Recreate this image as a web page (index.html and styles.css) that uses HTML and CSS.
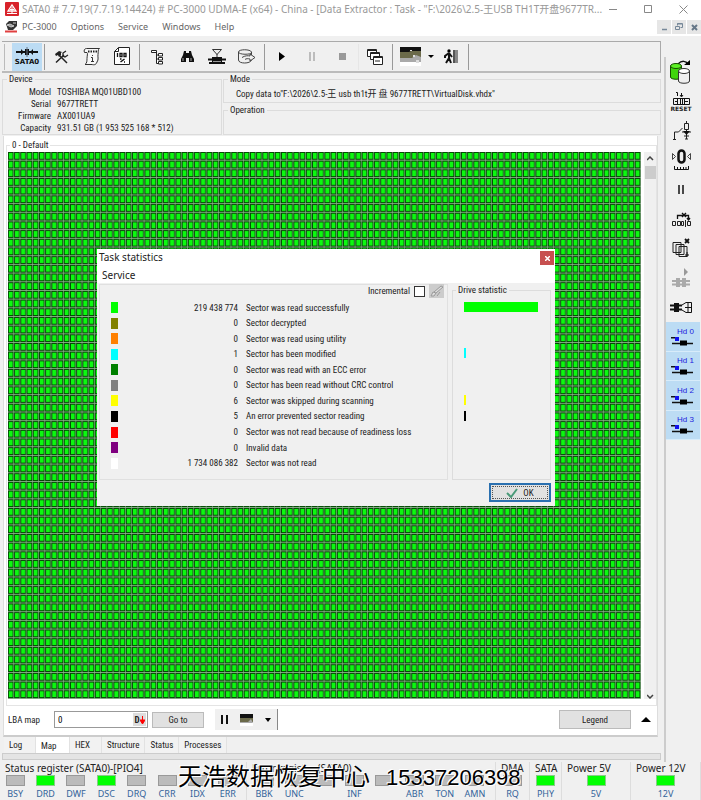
FILE: index.html
```html
<!DOCTYPE html>
<html lang="en">
<head>
<meta charset="utf-8">
<title>PC-3000 UDMA-E</title>
<link rel="stylesheet" href="styles.css">
</head>
<body>
<header class="titlebar">
  <svg class="app-icon" width="14" height="14" viewBox="0 0 14 14"><rect width="14" height="14" rx="1" fill="#d8222a"/><path d="M3 9l4-6 4 6z" stroke="#fff" fill="none" stroke-width="1.300"/><path d="M2 11.500h10M5 7.500h4M7 5v6" stroke="#fff" fill="none"/></svg>
  <h1 class="title">SATA0 # 7.7.19(7.7.19.14424) # PC-3000 UDMA-E (x64) - China - [Data Extractor : Task - "F:\2026\2.5-王USB TH1T开盘9677TR...</h1>
  <div class="winbtns">
    <button aria-label="Minimize"><svg width="9" height="9"><path d="M0 4.500h8" stroke="#888"/></svg></button>
    <button aria-label="Maximize"><svg width="9" height="9"><path d="M.5.5h7v7h-7z" fill="none" stroke="#888"/></svg></button>
    <button aria-label="Close"><svg width="9" height="9"><path d="M.5.5l8 8m0-8l-8 8" stroke="#888"/></svg></button>
  </div>
</header>
<nav class="menubar">
  <svg class="app-icon" width="14" height="12" viewBox="0 0 14 12"><path d="M1 3l3-3h8v5l-4 4H3z" fill="#333"/><path d="M2 4l3-1 4 2-3 1zM8 2h3" stroke="#ccc" fill="#999"/><path d="M0 10.500h12" stroke="#e04040" stroke-width="2"/></svg>
  <a href="#">PC-3000</a><a href="#">Options</a><a href="#">Service</a><a href="#">Windows</a><a href="#">Help</a>
  <div class="mdi">
    <button aria-label="Minimize child"><svg width="7" height="7"><path d="M1 5.500h5" stroke="#789" stroke-width="1.500"/></svg></button>
    <button aria-label="Restore child"><svg width="8" height="8"><path d="M2.500 2.500v-2h5v4h-2M.5 3.500h4v3h-4zM2 1h5" fill="none" stroke="#789"/></svg></button>
    <button aria-label="Close child"><svg width="7" height="7"><path d="M1 1l5 5m0-5l-5 5" stroke="#678" stroke-width="2"/></svg></button>
  </div>
</nav>

<div class="workspace">
  <main class="main">
    <div class="toolbar">
      <i class="sep grip"></i>
      <button class="tb active" aria-label="SATA0"><svg width="22" height="10" viewBox="0 0 22 10"><path d="M0 5h22" stroke="#111" stroke-width="2"/><path d="M5 2v6l3-3zM17 2v6l-3-3zM9 2h4v6H9z" fill="#111"/><path d="M11 0v10" stroke="#678"/></svg><b>SATA0</b></button>
      <i class="sep"></i>
      <button class="tb" aria-label="Utilities"><svg width="14" height="14" viewBox="0 0 14 14"><path d="M1 12.500L9 5M4 5l8 8" stroke="#222" stroke-width="1.500"/><path d="M0 4l4-3 3 1-1 1v2L4 7 3 5 1 6z" fill="#222"/><path d="M11 1L8 3v3l2 1 3-2" fill="none" stroke="#222" stroke-width="1.300"/></svg></button>
      <button class="tb" aria-label="Script"><svg width="18" height="19" viewBox="0 0 18 19"><path d="M3.500 1.500h13c-2 1-1 4-1.500 6s1 5-1 7.500c-1 3-3 3-5 2.500H2c2-1 2-4 2-6S5 6 4 5.500H1.500c-1-2 0-4 2-4z" fill="#f8f8f8" stroke="#333"/><path d="M5 4.500h9" stroke="#222" stroke-width="2" stroke-dasharray="1.500 1"/><path d="M9.500 8v1M8 10.500h1.500v4M8 14.500h3" stroke="#333" fill="none"/></svg></button>
      <button class="tb" aria-label="Sector edit"><svg width="16" height="19" viewBox="0 0 16 19"><path d="M4.500.5h11v17H.5V4.500z" fill="#fff" stroke="#222"/><path d="M.5 4.500h4v-4" fill="none" stroke="#222"/><path d="M3.500 6v4M6 6.500h2v3H6zM10 6.500h2v3h-2z" stroke="#111" stroke-width="1.300" fill="none"/><path d="M6 12h1.500M6.500 15l4-3M10 15h1" stroke="#111" stroke-width="1.500"/></svg></button>
      <i class="sep"></i>
      <button class="tb" aria-label="Tree"><svg width="13" height="16" viewBox="0 0 13 16"><path d="M.5 1.500h5v2h-5zM5.500 3v11.500h2M5.500 6h2M5.500 10h2" fill="#fff" stroke="#222"/><path d="M7.500 4.500h4v2.500h-4zM7.500 8.500h4V11h-4zM7.500 12.500h4V15h-4z" fill="#fff" stroke="#222"/></svg></button>
      <button class="tb" aria-label="Search"><svg width="13" height="12" viewBox="0 0 13 12"><path d="M3 0h2v2h3V0h2l1 4 2 4v3H8V7H5v4H0V8l2-4z" fill="#111"/><path d="M2 7v3M10 7v3" stroke="#aaa"/></svg></button>
      <button class="tb" aria-label="Filter"><svg width="18" height="16" viewBox="0 0 18 16"><path d="M4.500.5h9L9 5.500zM9 5v4" fill="#eee" stroke="#333"/><path d="M0 10.500h18M1 14h16" stroke="#111" stroke-width="2"/><path d="M4 8h10v7H4z" fill="#111"/><path d="M5 12.500h8" stroke="#999"/></svg></button>
      <button class="tb" aria-label="Export"><svg width="18" height="15" viewBox="0 0 18 15"><path d="M.5 3v8c0 4 12 4 13 0M.5 3c0-3 12-3 13 0s-13 3-13 0M13.500 3v3" fill="none" stroke="#444"/><path d="M4 8.500c3-2 6-2 8-1.500V5l5 3.500-5 3.500v-2c-2-.5-4-.5-5 .5" fill="#f0f0f0" stroke="#444"/></svg></button>
      <i class="sep"></i>
      <button class="tb" aria-label="Start"><svg width="6" height="9"><path d="M0 0l6 4.500L0 9z"/></svg></button>
      <button class="tb" aria-label="Pause"><svg width="6" height="9"><path d="M1 0v9M5 0v9" stroke="#aaa" stroke-width="1.500"/></svg></button>
      <button class="tb" aria-label="Stop"><svg width="7" height="7"><path d="M0 0h7v7H0z" fill="#999"/></svg></button>
      <i class="sep light"></i>
      <button class="tb" aria-label="Windows"><svg width="16" height="16" viewBox="0 0 16 16"><g fill="#fff" stroke="#222"><path d="M.5.5h9v7h-9z"/><path d="M0 1.500h10"/><path d="M3.500 3.500h9v7h-9z"/><path d="M3 4.500h10"/><path d="M6.500 7.500h9v8h-9z"/><path d="M6 8.500h10M8 12h5"/></g></svg></button>
      <i class="sep"></i>
      <button class="tb" aria-label="Map view"><svg width="21" height="19" viewBox="0 0 21 19"><path d="M0 0h21v6H0z" fill="#111"/><path d="M0 5h9l2-1h10v7H0z" fill="#6b6a4a"/><path d="M0 11h12l4-3 5 2v5H0z" fill="#aaa"/><path d="M0 15h21v4H0z" fill="#fff"/><path d="M13 8h2v2h-2zM16 13h3v3h-3zM10 3h2v1h-2z" fill="#ddd"/></svg></button>
      <button class="drop" aria-label="Map view options"><svg width="6" height="3"><path d="M0 0h6L3 3z"/></svg></button>
      <button class="tb" aria-label="Exit"><svg width="14" height="15" viewBox="0 0 14 15"><circle cx="5" cy="2" r="1.700"/><path d="M5 4L1 7v2M5 4l3 4M5 4v5l-3 5M5 9l2 5" fill="none" stroke="#111" stroke-width="2"/><path d="M9 1h5v13H9z" fill="#888"/><path d="M10 1v13" stroke="#222"/></svg></button>
      <i class="sep"></i>
    </div>

    <section class="info">
      <fieldset class="device"><legend>Device</legend>
        <dl><dt>Model</dt><dd>TOSHIBA MQ01UBD100</dd><dt>Serial</dt><dd>9677TRETT</dd><dt>Firmware</dt><dd>AX001UA9</dd><dt>Capacity</dt><dd>931.51 GB (1 953 525 168 * 512)</dd></dl>
      </fieldset>
      <div class="modes">
        <fieldset class="mode"><legend>Mode</legend><p>Copy data to"F:\2026\2.5-王 usb th1t开 盘 9677TRETT\VirtualDisk.vhdx"</p></fieldset>
        <fieldset class="operation"><legend>Operation</legend></fieldset>
      </div>
    </section>

    <section class="panel">
      <fieldset class="map"><legend>0 - Default</legend>
        <div class="mapbody">
          <svg class="cells" viewBox="0 0 1020 630" preserveAspectRatio="none" role="img" aria-label="Sector map">
            <defs><pattern id="cell" width="10" height="10" patternUnits="userSpaceOnUse"><path fill="#8fb08f" d="M0 0h10v10H0z"/><path fill="#044804" d="M0 0h9v9H0z"/><path fill="#0cf810" d="M1.400 1.100h6.200v6.800h-6.200z"/></pattern></defs>
            <rect width="1020" height="630" fill="url(#cell)"/>
          </svg>
          <div class="scroll"><svg width="7" height="5"><path d="M0 4l3-3 3 3" fill="none" stroke="#444" stroke-width="1.500"/></svg><i class="thumb"></i><svg width="7" height="5"><path d="M0 1l3 3 3-3" fill="none" stroke="#444" stroke-width="1.500"/></svg></div>
        </div>
      </fieldset>
      <div class="lba">
        <label for="lba">LBA map</label>
        <span class="field"><input id="lba" value="0"><button aria-label="Decimal"><b>D</b><svg width="5" height="8"><path d="M2.500 0v5M0 4h5L2.500 8z" fill="red" stroke="red"/></svg></button></span>
        <button class="btn goto">Go to</button>
        <div class="mini">
          <button aria-label="Pause map"><svg width="7" height="9"><path d="M1 0v9M6 0v9" stroke="#111" stroke-width="2"/></svg></button>
          <button aria-label="Map mode"><svg width="13" height="12" viewBox="0 0 13 12"><path d="M0 0h13v5H0z" fill="#111"/><path d="M0 4h13v4H0z" fill="#6b6a4a"/><path d="M0 8h8l3-3 2 4H0z" fill="#aaa"/><path d="M0 9h13v3H0z" fill="#fff"/></svg></button>
          <button aria-label="Map mode options"><svg width="6" height="4"><path d="M0 0h6L3 4z"/></svg></button>
        </div>
        <button class="btn legend-btn">Legend</button>
        <button class="up" aria-label="Collapse"><svg width="10" height="5"><path d="M0 5h10L5 0z"/></svg></button>
      </div>
    </section>

    <nav class="tabs"><a href="#">Log</a><a href="#" class="on">Map</a><a href="#">HEX</a><a href="#">Structure</a><a href="#">Status</a><a href="#">Processes</a></nav>
    <div class="strip"></div>
  </main>

  <aside class="side">
    <div class="side-list">
    <button aria-label="Copy drive"><svg width="22" height="24" viewBox="0 0 22 24"><path d="M8 4c4-4 8-3 10 0" fill="none" stroke="#111" stroke-width="1.500"/><path d="M14 5h6V0z"/><path d="M.5 6v11c0 3 11 3 11 0V6z" fill="#3fd60c" stroke="#174d00"/><ellipse cx="6" cy="6" rx="5.500" ry="2.500" fill="#5cf024" stroke="#174d00"/><path d="M8.500 11v10c0 3 11 3 11 0V11z" fill="#eee" stroke="#333"/><ellipse cx="14" cy="11" rx="5.500" ry="2.500" fill="#fff" stroke="#333"/></svg></button>
    <button class="reset" aria-label="Reset"><svg width="17" height="15" viewBox="0 0 17 15"><path d="M3 1.500h1.500V5M8.500 2v3M7 4l1.500 2L10 4" fill="none" stroke="#111"/><path d="M.5 7.500h16v6H.5zM2 10.500h2M12 10.500h3" stroke="#111" fill="none"/><path d="M4.500 8v5M7.500 8v5M9.500 8v5M11.500 8v5" stroke="#111"/></svg><b>RESET</b></button>
    <button aria-label="Power switch"><svg width="19" height="19" viewBox="0 0 19 19"><path d="M1 18.500h3M2.500 18v-7h4l4-4M10 11h9M14.500 0v3M14.500 9v9M12 15h5M13 18h3" fill="none" stroke="#222"/><path d="M12.500 2.500h4v6h-4z" fill="#eee" stroke="#222"/><path d="M11 10h7l-3.500 4z" fill="#111"/></svg></button>
    <button aria-label="Position zero"><svg width="19" height="22" viewBox="0 0 19 22"><rect x="6.500" y="1.500" width="6" height="12" rx="3" fill="none" stroke="#111" stroke-width="2.500"/><path d="M.5 4.500v6l3-3zM18.500 4.500v6l-3-3z" fill="none" stroke="#444"/><path d="M2.500 17v3.500h14V17M5.500 18v3M8.500 18v3M11.500 18v3M14 18v3" fill="none" stroke="#111"/></svg></button>
    <button aria-label="Pause drive"><svg width="6" height="9"><path d="M1 0v9M5 0v9" stroke="#111" stroke-width="1.500"/></svg></button>
    <button aria-label="Skip"><svg width="19" height="15" viewBox="0 0 19 15"><path d="M5.500 7V3.500h11V7M15 6l1.500 2L18 6M10 1l4 4m0-4l-4 4" fill="none" stroke="#111" stroke-width="1.300"/><path d="M.5 9.500h3v4h-3zM5.500 9.500h3v4h-3zM9.500 9.500h2v4h-2zM13.500 8v7M15.500 9.500h3v4h-3z" fill="none" stroke="#222"/></svg></button>
    <button aria-label="Clear copies"><svg width="18" height="20" viewBox="0 0 18 20"><path d="M13 1l4 4m0-4l-4 4" stroke="#111" stroke-width="1.800"/><path d="M1 4.500h8v10H1zM4 6.500h8v10H4zM7 8.500h8v10H7z" fill="#eee" stroke="#222"/><path d="M15 14v5M13 17h4" stroke="#111"/></svg></button>
    <button aria-label="Resume head"><svg width="18" height="20" viewBox="0 0 18 20"><path d="M12 0v8l4-4z" fill="#999"/><path d="M0 13h18M0 16.500h18" stroke="#aaa" stroke-width="2"/><path d="M4 10h4v9H4zM10 10h4v9h-4z" fill="#aaa"/></svg></button>
    <button aria-label="Connector"><svg width="22" height="11" viewBox="0 0 22 11"><path d="M0 3.500h12M0 7.500h12" stroke="#111" stroke-width="2"/><path d="M4 1h5v9H4z" fill="#111"/><path d="M12 3l4-2.500h5.500v10H16L12 8M15 5.500h6M18 1v9" fill="none" stroke="#111"/></svg></button>
    <button class="hd"><span>Hd 0</span><svg width="22" height="9" viewBox="0 0 22 9"><path d="M0 .7h4M1 6.500h21" stroke="#111" stroke-width="1.500"/><path d="M4 0h4v4H4z" fill="#11e"/><path d="M9 3.500h7v5H9z"/></svg></button>
    <button class="hd"><span>Hd 1</span><svg width="22" height="9" viewBox="0 0 22 9"><path d="M0 .7h4M1 6.500h21" stroke="#111" stroke-width="1.500"/><path d="M4 0h4v4H4z" fill="#11e"/><path d="M9 3.500h7v5H9z"/></svg></button>
    <button class="hd"><span>Hd 2</span><svg width="22" height="9" viewBox="0 0 22 9"><path d="M0 .7h4M1 6.500h21" stroke="#111" stroke-width="1.500"/><path d="M4 0h4v4H4z" fill="#11e"/><path d="M9 3.500h7v5H9z"/></svg></button>
    <button class="hd"><span>Hd 3</span><svg width="22" height="9" viewBox="0 0 22 9"><path d="M0 .7h4M1 6.500h21" stroke="#111" stroke-width="1.500"/><path d="M4 0h4v4H4z" fill="#11e"/><path d="M9 3.500h7v5H9z"/></svg></button>
    </div>
  </aside>
</div>

<footer class="registers">
  <section class="reg status"><h2>Status register (SATA0)-[PIO4]</h2><ul><li>BSY</li><li class="lit">DRD</li><li>DWF</li><li class="lit">DSC</li><li>DRQ</li><li>CRR</li><li>IDX</li><li>ERR</li></ul></section>
  <section class="reg errors"><h2>Error register (SATA0)</h2><ul><li>BBK</li><li>UNC</li><li></li><li>INF</li><li></li><li>ABR</li><li>TON</li><li>AMN</li></ul></section>
  <section class="reg"><h2>DMA</h2><ul><li>RQ</li></ul></section>
  <section class="reg"><h2>SATA</h2><ul><li class="lit">PHY</li></ul></section>
  <section class="reg"><h2>Power 5V</h2><ul><li class="lit">5V</li></ul></section>
  <section class="reg"><h2>Power 12V</h2><ul><li class="lit">12V</li></ul></section>
  <p class="watermark">天浩数据恢复中心<span>15337206398</span></p>
</footer>

<div class="dialog" role="dialog" aria-labelledby="dlg-title">
  <div class="dlg-title"><h2 id="dlg-title">Task statistics</h2><button aria-label="Close dialog"><svg width="5" height="5"><path d="M0 0l5 5m0-5L0 5" stroke="#fff" stroke-width="1.500"/></svg></button></div>
  <nav class="dlg-menu"><a href="#">Service</a></nav>
  <div class="dlg-body">
    <section class="stats">
      <div class="inc"><label for="inc">Incremental</label><input type="checkbox" id="inc"><button aria-label="Clear statistics" disabled><svg width="15" height="14" viewBox="0 0 15 14"><path d="M2 12l2-4 3 1-2 3zM5 8l7-6 2 1-7 6M8 12l3-4" fill="#ddd" stroke="#999"/></svg></button></div>
      <table>
        <tr><td><i class="sw ok"></i></td><td>219 438 774</td><td>Sector was read successfully</td></tr>
        <tr><td><i class="sw decrypted"></i></td><td>0</td><td>Sector decrypted</td></tr>
        <tr><td><i class="sw utility"></i></td><td>0</td><td>Sector was read using utility</td></tr>
        <tr><td><i class="sw modified"></i></td><td>1</td><td>Sector has been modified</td></tr>
        <tr><td><i class="sw ecc"></i></td><td>0</td><td>Sector was read with an ECC error</td></tr>
        <tr><td><i class="sw crc"></i></td><td>0</td><td>Sector has been read without CRC control</td></tr>
        <tr><td><i class="sw skipped"></i></td><td>6</td><td>Sector was skipped during scanning</td></tr>
        <tr><td><i class="sw error"></i></td><td>5</td><td>An error prevented sector reading</td></tr>
        <tr><td><i class="sw notready"></i></td><td>0</td><td>Sector was not read because of readiness loss</td></tr>
        <tr><td><i class="sw invalid"></i></td><td>0</td><td>Invalid data</td></tr>
        <tr><td><i class="sw unread"></i></td><td>1 734 086 382</td><td>Sector was not read</td></tr>
      </table>
    </section>
    <fieldset class="drive"><legend>Drive statistic</legend>
      <div class="bars"><i class="bar ok full"></i><i></i><i></i><i class="bar modified"></i><i></i><i></i><i class="bar skipped"></i><i class="bar error"></i><i></i><i></i><i></i></div>
    </fieldset>
  </div>
  <div class="dlg-foot"><button class="okbtn"><svg width="12" height="10"><path d="M1 5l4 4 6-8" fill="none" stroke="#4a9a78" stroke-width="2"/></svg>OK</button></div>
</div>
</body>
</html>
```
FILE: styles.css
```css
* { box-sizing: border-box; }
body {
  margin: 0;
  min-height: 100vh;
  display: flex;
  flex-direction: column;
  position: relative;
  background: #f0f0f0;
  color: #222;
  font: 9px/12px "Roboto Condensed", Roboto, "Noto Sans CJK SC", sans-serif;
}
h1, h2, p, dl, dd, ul { margin: 0; padding: 0; font-weight: normal; font-size: inherit; }
a { color: inherit; text-decoration: none; }
svg { display: block; flex: none; }
button { margin: 0; padding: 0; border: 0; background: none; color: inherit; font: inherit; display: flex; align-items: center; justify-content: center; }
fieldset { margin: 0; padding: 0; border: 1px solid #dcdcdc; min-width: 0; }
legend { padding: 0 2px; margin-left: 4px; }

.titlebar, .menubar { display: flex; align-items: center; height: 18px; background: #fff; padding-left: 5px; color: #999; font-family: "Noto Sans", "Noto Sans CJK SC", sans-serif; }
.title { flex: 1; min-width: 0; margin-left: 3px; font-size: 10px; white-space: nowrap; line-height: 18px; }
.winbtns { display: flex; flex: none; }
.winbtns button { width: 35px; height: 18px; }
.menubar { color: #666; font-size: 9px; }
.menubar a { margin-left: 14px; }
.menubar .app-icon + a { margin-left: 3px; }
.mdi { display: flex; gap: 1px; margin-left: auto; }
.mdi button { width: 14px; height: 14px; background: #e6e6e6; }

.workspace { flex: 1; display: flex; }
.main { flex: 1; min-width: 0; display: flex; flex-direction: column; padding: 5px 3px 0 2px; }
.toolbar { display: flex; align-items: center; height: 32px; border: 1px solid #aaa; border-left: 0; border-bottom: 2px solid #bbb; }
.tb { width: 30px; height: 28px; flex-direction: column; gap: 2px; }
.tb b { font: bold 7px/7px "DejaVu Sans", sans-serif; color: #111; }
.tb.active { background: #bcdcf4; }
.sep { width: 1px; height: 26px; background: #999; margin: 0 2px; }
.sep.grip { margin: 0 7px 0 2px; background: #bbb; }
.sep.light { background: #e6e6e6; margin: 0 1px; }
.drop { width: 11px; height: 28px; }

.info { display: flex; gap: 1px; height: 62px; }
.info fieldset { height: 100%; }
.device { width: 220px; }
.device dl { display: grid; grid-template-columns: 48px 1fr; column-gap: 6px; grid-auto-rows: 12px; margin-top: 1px; }
.device dt { text-align: right; }
.modes { flex: 1; display: flex; flex-direction: column; gap: 1px; }
.info .mode { height: 30px; }
.info .operation { flex: 1; height: auto; }
.modes p { padding: 3px 12px; line-height: 12px; white-space: nowrap; }

.panel { flex: 1; display: flex; flex-direction: column; margin: 1px 3px 0 1px; background: #fff; padding: 3px 0 2px; border: 1px solid #ddd; border-top: 0; border-bottom: 2px solid #ccc; }
.map { flex: 1; display: flex; margin: 0 0 0 2px; border-color: #e4e4e4; }
.map legend { margin-left: 3px; }
.mapbody { display: flex; gap: 3px; width: 100%; height: 100%; padding: 1px 0 6px 1px; }
.cells { flex: 1; min-width: 0; height: 100%; }
.scroll { width: 12px; display: flex; flex-direction: column; align-items: center; gap: 5px; padding: 4px 0 0; background: #f0f0f0; }
.thumb { width: 11px; height: 13px; background: #ccc; margin-bottom: auto; }
.lba { display: flex; align-items: center; height: 27px; padding-left: 4px; }
.lba label { width: 46px; }
.field { display: flex; align-items: center; width: 94px; height: 17px; border: 1px solid #999; background: #fff; padding-right: 1px; }
.field input { flex: 1; min-width: 0; border: 0; padding: 0 3px; font: inherit; background: none; }
.field button { width: 13px; height: 13px; background: #ddd; font-size: 9px; }
.btn { height: 16px; background: #e1e1e1; border: 1px solid #bbb; }
.goto { width: 52px; margin: 0 11px 0 4px; }
.mini { display: flex; align-items: center; height: 21px; width: 63px; justify-content: space-around; background: #f0f0f0; border-right: 1px solid #888; }
.legend-btn { width: 72px; height: 19px; margin-left: auto; }
.up { width: 26px; height: 19px; padding-left: 4px; }

.tabs { display: flex; height: 16px; margin-left: 2px; }
.tabs a { padding: 2px 5px 0; border-right: 1px solid #e2e2e2; background: #f2f2f2; }
.tabs a:first-child { width: 32px; }
.tabs .on { width: 34px; background: #fff; padding-top: 3px; }
.tabs a:nth-child(3) { width: 32px; }
.strip { height: 7px; border: 1px solid #ccc; background: #e4e4e4; margin: 0 0 2px; }

.side { width: 37px; margin-top: 21px; border-left: 2px solid #ccc; }
.side-list { display: grid; grid-template-rows: repeat(13, 1fr); height: 383px; }
.side button { width: 100%; padding-right: 5px; }
.side .reset { flex-direction: column; }
.side b { font: bold 6px/6px "DejaVu Sans", sans-serif; }
.side .hd { flex-direction: column; width: 34px; background: #bcdcf4; border-bottom: 1px solid #d8ecfa; padding: 0 2px 0 0; }
.hd span { color: #22d; font: 8px/10px "Liberation Sans", sans-serif; align-self: flex-end; margin-right: 4px; }

.registers { position: relative; display: grid; grid-template-columns: 247fr 249fr 34fr 32fr 69fr 70fr; height: 38px; font-family: "Noto Sans", sans-serif; }
.reg { min-width: 0; border-right: 1px solid #ddd; border-bottom: 1px solid #ddd; }
.reg h2 { padding-left: 5px; font-size: 10px; line-height: 13px; white-space: nowrap; }
.reg ul { list-style: none; display: flex; justify-content: center; }
.status ul { padding-right: 3px; }
.errors ul { padding: 0 5px 0 2px; }
.reg li { flex: 1; text-align: center; color: #33639a; font-size: 9px; line-height: 14px; }
.reg li::before { content: ""; display: block; width: 17px; height: 9px; margin: 0 auto 1px; background: #bbb; border: 1px solid #999; }
.reg .lit::before { background: #0f0; border-color: #8c8; }
.watermark { position: absolute; left: 178px; top: 0; color: #000; font: 24px/26px "Noto Sans CJK SC", sans-serif; white-space: nowrap; text-shadow: 1px 1px #fff, -1px -1px #fff; }
.watermark span { margin-left: 16px; font: 22px/26px "Liberation Sans", sans-serif; }

.dialog { position: absolute; left: 97px; top: 249px; width: 458px; height: 257px; background: #f0f0f0; display: flex; flex-direction: column; }
.dlg-title, .dlg-menu { background: #fff; font: 10px/17px "Noto Sans", sans-serif; }
.dlg-title { display: flex; justify-content: space-between; padding-left: 2px; height: 18px; }
.dlg-title button { width: 14px; height: 14px; background: #c75050; margin: 2px 1px 0 0; }
.dlg-menu { padding-left: 5px; height: 16px; }
.dlg-body { display: flex; gap: 4px; padding: 1px 4px 0 2px; height: 197px; }
.stats { flex: 1; border: 1px solid #e0e0e0; }
.inc { display: flex; align-items: center; justify-content: flex-end; gap: 4px; height: 12px; margin-bottom: 3px; padding-right: 3px; }
.inc input { appearance: none; width: 11px; height: 11px; margin: 0; border: 1px solid #333; background: #fff; }
.inc button { background: #ccc; height: 14px; }
.stats table { width: 100%; height: 171px; border-collapse: collapse; white-space: nowrap; }
.stats td { padding: 0; }
.stats td:first-child { width: 40px; padding-left: 11px; }
.stats td:nth-child(2) { text-align: right; width: 98px; }
.stats td:nth-child(3) { padding-left: 8px; }
.sw { display: block; width: 7px; height: 11px; }
.drive { width: 99px; }
.drive legend { margin-left: 3px; }
.bars { display: grid; grid-template-rows: repeat(11, 1fr); align-items: center; height: 171px; padding: 0 12px 0 11px; margin-top: 3px; }
.bar { width: 2px; height: 10px; }
.full { width: 100%; }
.ok { background: #0f0; }
.decrypted { background: #808000; }
.utility { background: #ff8000; }
.modified { background: #0ff; }
.ecc { background: #008000; }
.crc { background: #808080; }
.skipped { background: #ff0; }
.error { background: #000; }
.notready { background: #f00; }
.invalid { background: #800080; }
.unread { background: #fff; }
.dlg-foot { display: flex; justify-content: flex-end; padding: 3px 4px 0 0; }
.okbtn { width: 62px; height: 19px; gap: 5px; background: #e1e1e1; border: 2px solid #2a70b0; outline: 1px dotted #555; outline-offset: -4px; }
```
